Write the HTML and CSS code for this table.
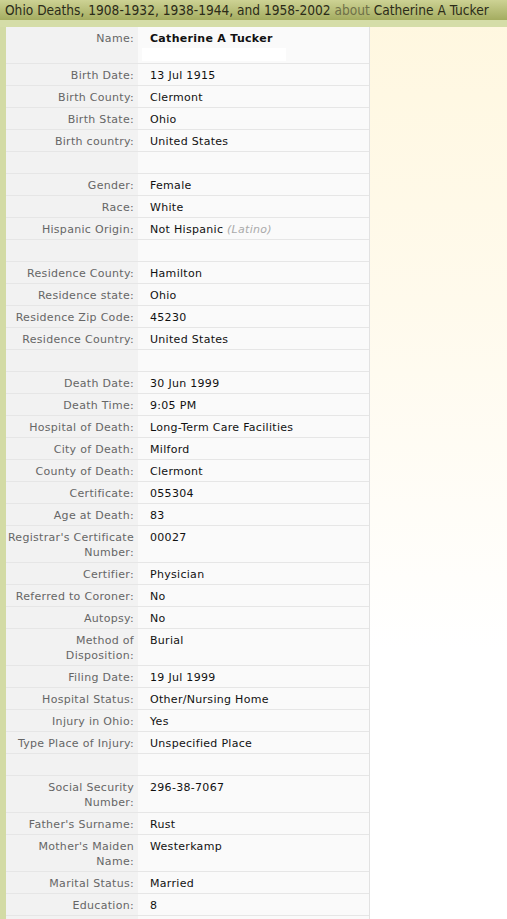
FILE: index.html
```html
<!DOCTYPE html>
<html>
<head>
<meta charset="utf-8">
<link rel="stylesheet" href="styles.css">
</head>
<body>
<div class="header"><span class="title">Ohio Deaths, 1908-1932, 1938-1944, and 1958-2002</span> <span class="about">about</span> <span class="who">Catherine A Tucker</span></div>
<div class="band"></div>
<div class="main">
  <div class="record">
    <div class="row name-row"><div class="lbl">Name:</div><div class="val"><b>Catherine A Tucker</b><div class="blank-box"></div></div></div>
    <div class="row"><div class="lbl">Birth Date:</div><div class="val">13 Jul 1915</div></div>
    <div class="row"><div class="lbl">Birth County:</div><div class="val">Clermont</div></div>
    <div class="row"><div class="lbl">Birth State:</div><div class="val">Ohio</div></div>
    <div class="row"><div class="lbl">Birth country:</div><div class="val">United States</div></div>
    <div class="row"><div class="lbl">&nbsp;</div><div class="val">&nbsp;</div></div>
    <div class="row"><div class="lbl">Gender:</div><div class="val">Female</div></div>
    <div class="row"><div class="lbl">Race:</div><div class="val">White</div></div>
    <div class="row"><div class="lbl">Hispanic Origin:</div><div class="val">Not Hispanic <i class="note">(Latino)</i></div></div>
    <div class="row"><div class="lbl">&nbsp;</div><div class="val">&nbsp;</div></div>
    <div class="row"><div class="lbl">Residence County:</div><div class="val">Hamilton</div></div>
    <div class="row"><div class="lbl">Residence state:</div><div class="val">Ohio</div></div>
    <div class="row"><div class="lbl">Residence Zip Code:</div><div class="val">45230</div></div>
    <div class="row"><div class="lbl">Residence Country:</div><div class="val">United States</div></div>
    <div class="row"><div class="lbl">&nbsp;</div><div class="val">&nbsp;</div></div>
    <div class="row"><div class="lbl">Death Date:</div><div class="val">30 Jun 1999</div></div>
    <div class="row"><div class="lbl">Death Time:</div><div class="val">9:05 PM</div></div>
    <div class="row"><div class="lbl">Hospital of Death:</div><div class="val">Long-Term Care Facilities</div></div>
    <div class="row"><div class="lbl">City of Death:</div><div class="val">Milford</div></div>
    <div class="row"><div class="lbl">County of Death:</div><div class="val">Clermont</div></div>
    <div class="row"><div class="lbl">Certificate:</div><div class="val">055304</div></div>
    <div class="row"><div class="lbl">Age at Death:</div><div class="val">83</div></div>
    <div class="row"><div class="lbl">Registrar's Certificate Number:</div><div class="val">00027</div></div>
    <div class="row"><div class="lbl">Certifier:</div><div class="val">Physician</div></div>
    <div class="row"><div class="lbl">Referred to Coroner:</div><div class="val">No</div></div>
    <div class="row"><div class="lbl">Autopsy:</div><div class="val">No</div></div>
    <div class="row"><div class="lbl">Method of Disposition:</div><div class="val">Burial</div></div>
    <div class="row"><div class="lbl">Filing Date:</div><div class="val">19 Jul 1999</div></div>
    <div class="row"><div class="lbl">Hospital Status:</div><div class="val">Other/Nursing Home</div></div>
    <div class="row"><div class="lbl">Injury in Ohio:</div><div class="val">Yes</div></div>
    <div class="row"><div class="lbl">Type Place of Injury:</div><div class="val">Unspecified Place</div></div>
    <div class="row"><div class="lbl">&nbsp;</div><div class="val">&nbsp;</div></div>
    <div class="row"><div class="lbl">Social Security Number:</div><div class="val">296-38-7067</div></div>
    <div class="row"><div class="lbl">Father's Surname:</div><div class="val">Rust</div></div>
    <div class="row"><div class="lbl">Mother's Maiden Name:</div><div class="val">Westerkamp</div></div>
    <div class="row"><div class="lbl">Marital Status:</div><div class="val">Married</div></div>
    <div class="row"><div class="lbl">Education:</div><div class="val">8</div></div>
    <div class="row"><div class="lbl">&nbsp;</div><div class="val">&nbsp;</div></div>
  </div>
</div>
</body>
</html>
```
FILE: styles.css
```css
html, body {
  margin: 0;
  padding: 0;
}
body {
  background: linear-gradient(to bottom, #fff7df 0px, #fffaec 300px, #ffffff 650px);
  font-family: "DejaVu Sans", Verdana, sans-serif;
  font-size: 11px;
  letter-spacing: 0.3px;
  min-height: 919px;
}
.header {
  height: 20px;
  box-sizing: border-box;
  padding: 2px 0 0 5px;
  background: linear-gradient(to bottom, #cdd294, #a4ac60);
  font-family: "DejaVu Sans Condensed", "DejaVu Sans", sans-serif;
  font-stretch: condensed;
  font-size: 13.6px;
  letter-spacing: 0;
  line-height: 16px;
  color: #2b2b18;
  white-space: nowrap;
  overflow: hidden;
}
.header .about {
  color: #6f7048;
}
.band {
  height: 7px;
  background: #d5dda8;
}
.main {
  display: flex;
}
.record {
  width: 363px;
  border-left: 6px solid #d3dba5;
  border-right: 1px solid #e2e2e2;
  background: #fafafa;
}
.row {
  display: grid;
  grid-template-columns: 132px 1fr;
  border-bottom: 1px solid #e6e6e6;
  line-height: 15px;
}
.lbl {
  background: #f2f2f2;
  color: #666;
  text-align: right;
  padding: 4px 4px 2px 0;
}
.val {
  color: #111;
  padding: 4px 4px 2px 12px;
}
.note {
  color: #aaa;
}
.name-row .val b {
  color: #111;
}
.blank-box {
  margin: 2px 0 0 -8px;
  width: 144px;
  height: 13px;
  background: #fff;
}
```
